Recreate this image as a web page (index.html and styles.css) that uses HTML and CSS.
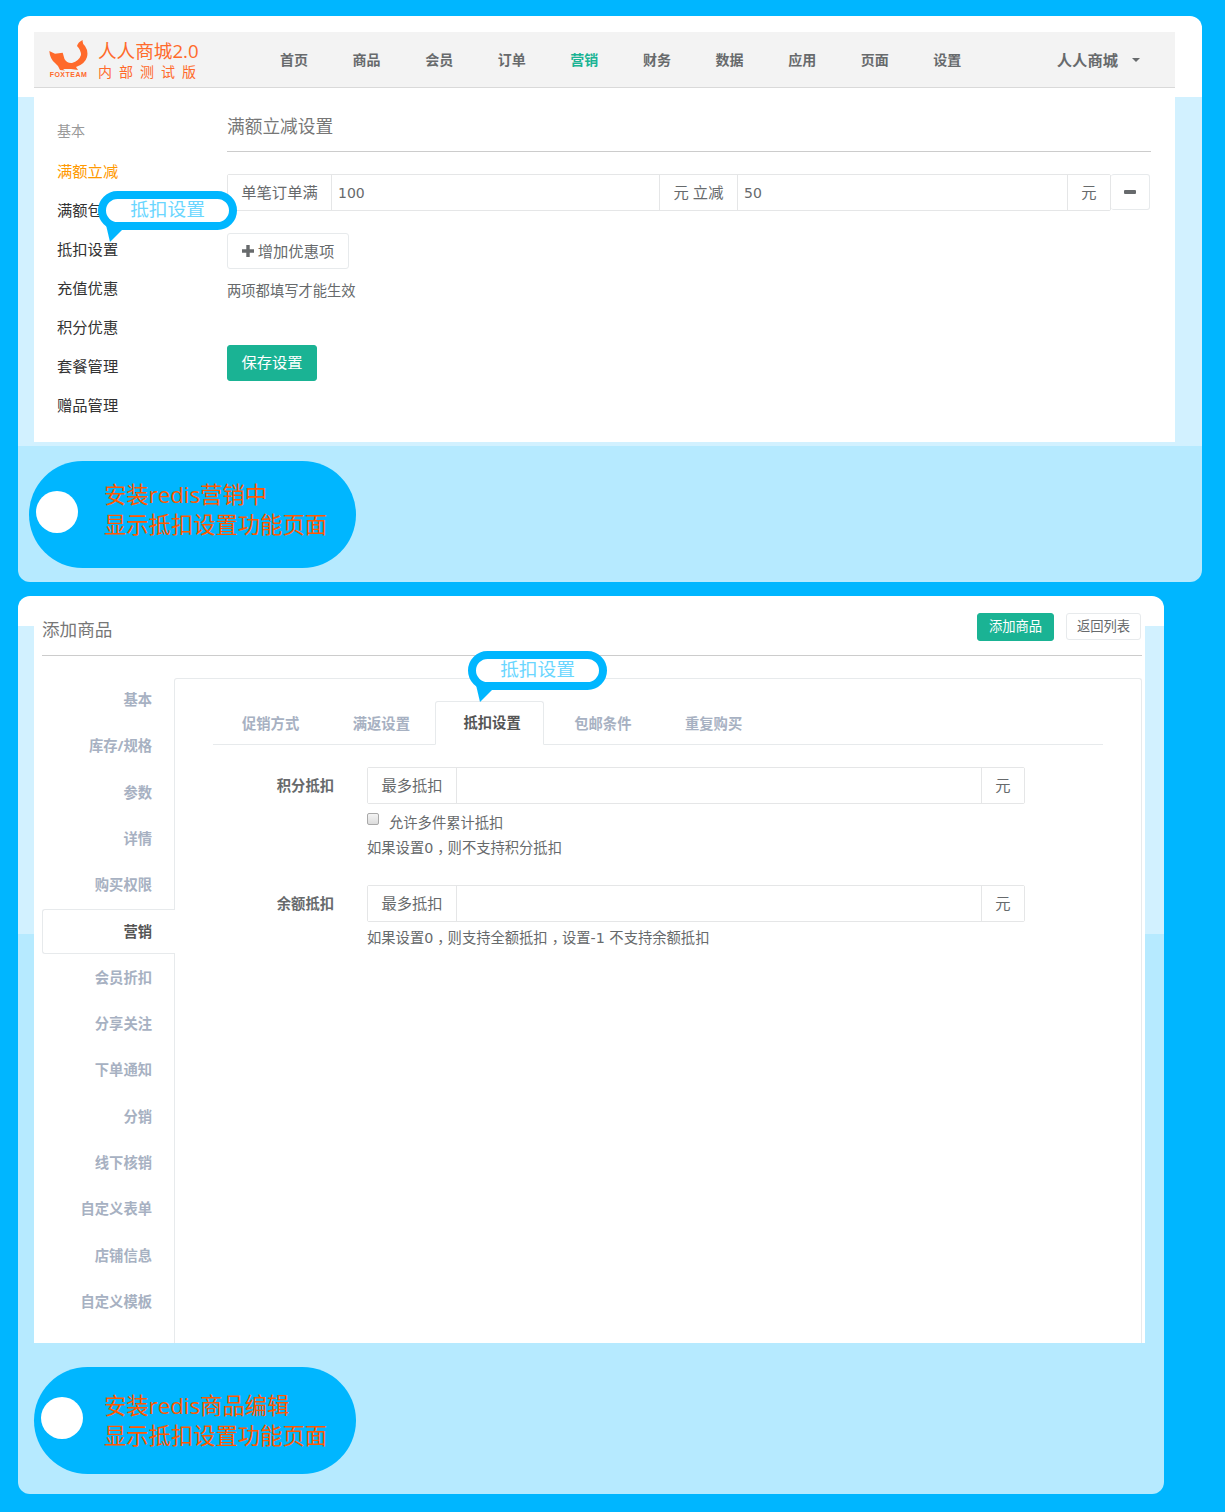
FILE: index.html
```html
<!DOCTYPE html>
<html lang="zh">

<head>
    <meta charset="UTF-8">
    <meta name="viewport" content="width=device-width, initial-scale=1.0">
    <title>安装redis 显示抵扣设置</title>
    <link rel="stylesheet" href="styles.css">
</head>

<body>

    <!-- 营销页 -->
    <section class="panel panel-market">
        <div class="sheet">
            <nav class="topnav">
                <div class="logo">
                    <div class="logo-mark">
                        <svg class="fox" viewBox="0 1 39 31" width="39" height="31">
                            <path d="M0.3 12 L6 14.7 L13.7 13.7 L15.5 20 Q18 24.5 23 24 Q30 22 32 16 Q32 11 28 7 Q29 3 33.7 1 Q33 4 36 7 Q39.5 12 38 18 Q36 25 27 28 L29 31 L22 30 L14 30 L16 31.5 L11 31 Q9 26 6 24 Q1 20 0.3 12 Z" fill="#ff6a2b"/>
                        </svg>
                        <span class="logo-team">FOXTEAM</span>
                    </div>
                    <div class="logo-text">
                        <span class="logo-name">人人商城2.0</span>
                        <span class="logo-sub">内部测试版</span>
                    </div>
                </div>
                <ul class="nav-list">
                    <li>首页</li>
                    <li>商品</li>
                    <li>会员</li>
                    <li>订单</li>
                    <li class="nav-on">营销</li>
                    <li>财务</li>
                    <li>数据</li>
                    <li>应用</li>
                    <li>页面</li>
                    <li>设置</li>
                </ul>
                <div class="nav-user">人人商城<span class="caret"></span></div>
            </nav>

            <div class="market-body">
                <ul class="side-menu">
                    <li class="side-title">基本</li>
                    <li class="side-on">满额立减</li>
                    <li>满额包邮</li>
                    <li>抵扣设置</li>
                    <li>充值优惠</li>
                    <li>积分优惠</li>
                    <li>套餐管理</li>
                    <li>赠品管理</li>
                </ul>
                <div class="market-main">
                    <h2 class="market-title">满额立减设置</h2>
                    <div class="rule-row">
                        <div class="input-group rule-group">
                            <span class="addon addon-order">单笔订单满</span>
                            <input class="field field-first" type="text" value="100">
                            <span class="addon addon-cut">元 立减</span>
                            <input class="field" type="text" value="50">
                            <span class="addon addon-unit">元</span>
                        </div>
                        <button class="btn btn-minus" type="button">
                            <svg viewBox="0 0 12 4" width="12" height="4"><rect width="12" height="4" rx="1" fill="#676a6c"/></svg>
                        </button>
                    </div>
                    <button class="btn btn-add" type="button">
                        <svg viewBox="0 0 12 12" width="12" height="12"><path d="M4.3 0h3.4v4.3H12v3.4H7.7V12H4.3V7.7H0V4.3h4.3z" fill="#676a6c"/></svg>
                        增加优惠项
                    </button>
                    <p class="rule-help">两项都填写才能生效</p>
                    <button class="btn btn-save" type="button">保存设置</button>
                </div>
            </div>
        </div>

        <div class="note note-market">
            <span class="note-dot"></span>
            <p class="note-text">安装redis营销中<br>显示抵扣设置功能页面</p>
        </div>

        <div class="bubble bubble-market">抵扣设置</div>
    </section>

    <!-- 商品编辑页 -->
    <section class="panel panel-goods">
        <div class="sheet sheet-goods">
            <header class="goods-head">
                <h2 class="goods-title">添加商品</h2>
                <div class="goods-actions">
                    <button class="btn btn-green-sm" type="button">添加商品</button>
                    <button class="btn btn-back" type="button">返回列表</button>
                </div>
            </header>

            <div class="goods-body">
                <ul class="goods-side">
                    <li>基本</li>
                    <li>库存/规格</li>
                    <li>参数</li>
                    <li>详情</li>
                    <li>购买权限</li>
                    <li class="goods-side-on">营销</li>
                    <li>会员折扣</li>
                    <li>分享关注</li>
                    <li>下单通知</li>
                    <li>分销</li>
                    <li>线下核销</li>
                    <li>自定义表单</li>
                    <li>店铺信息</li>
                    <li>自定义模板</li>
                </ul>

                <div class="goods-box">
                    <ul class="tabs">
                        <li>促销方式</li>
                        <li>满返设置</li>
                        <li class="tab-on">抵扣设置</li>
                        <li>包邮条件</li>
                        <li>重复购买</li>
                    </ul>

                    <div class="form-row">
                        <label class="form-label">积分抵扣</label>
                        <div class="form-col">
                            <div class="input-group form-group">
                                <span class="addon addon-max">最多抵扣</span>
                                <input class="field" type="text">
                                <span class="addon addon-unit">元</span>
                            </div>
                            <label class="check-line"><input type="checkbox"> 允许多件累计抵扣</label>
                            <p class="form-help">如果设置0<span class="comma">，</span>则不支持积分抵扣</p>
                        </div>
                    </div>

                    <div class="form-row">
                        <label class="form-label">余额抵扣</label>
                        <div class="form-col">
                            <div class="input-group form-group">
                                <span class="addon addon-max">最多抵扣</span>
                                <input class="field" type="text">
                                <span class="addon addon-unit">元</span>
                            </div>
                            <p class="form-help">如果设置0<span class="comma">，</span>则支持全额抵扣<span class="comma">，</span>设置-1 不支持余额抵扣</p>
                        </div>
                    </div>
                </div>
            </div>
        </div>

        <div class="note note-goods">
            <span class="note-dot"></span>
            <p class="note-text">安装redis商品编辑<br>显示抵扣设置功能页面</p>
        </div>

        <div class="bubble bubble-goods">抵扣设置</div>
    </section>

</body>

</html>
```

FILE: styles.css
```css
* {
    box-sizing: border-box;
}

body {
    font-family: "Open Sans", "Noto Sans CJK SC", sans-serif;
    margin: 0;
    padding: 16px 18px 0;
    height: 1512px;
    overflow: hidden;
    background-color: #00b6ff;
    color: #676a6c;
    font-size: 14px;
}

ul {
    list-style: none;
    margin: 0;
    padding: 0;
}

h2,
p {
    margin: 0;
    font-weight: 400;
}

/* Panels */
.panel {
    position: relative;
    border-radius: 12px;
}

.panel-market {
    width: 1184px;
    height: 566px;
    padding: 16px 27px 0 16px;
    background: linear-gradient(#fff 81px, #d2f1ff 81px, #d2f1ff 430px, #b6eaff 430px);
}

.panel-goods {
    width: 1146px;
    height: 898px;
    margin-top: 14px;
    padding: 0 19px 0 16px;
    background: linear-gradient(#fff 30px, #d2f1ff 30px, #d2f1ff 338px, #b6eaff 338px);
}

.sheet {
    background-color: #fff;
}

/* Top nav */
.topnav {
    display: flex;
    align-items: center;
    height: 56px;
    padding-right: 35px;
    background-color: #f3f3f3;
    border-bottom: 1px solid #d9d9d9;
}

.logo {
    display: flex;
    width: 223.7px;
    padding-left: 15px;
}

.logo-mark {
    display: flex;
    flex-direction: column;
    align-items: center;
    width: 39px;
}

.fox {
    display: block;
}

.logo-team {
    font-family: "Liberation Sans", sans-serif;
    font-size: 7px;
    font-weight: 700;
    letter-spacing: 0.5px;
    line-height: 10px;
    margin-top: -1px;
    color: #ff6a2b;
    white-space: nowrap;
}

.logo-text {
    display: flex;
    flex-direction: column;
    margin-left: 10px;
    color: #ff6a2b;
}

.logo-name {
    font-size: 18.6px;
    line-height: 22px;
    white-space: nowrap;
}

.logo-sub {
    font-size: 14px;
    line-height: 17px;
    letter-spacing: 7px;
    margin-top: 1px;
    white-space: nowrap;
}

.nav-list {
    display: flex;
    margin-bottom: 2px;
}

.nav-list li {
    width: 72.6px;
    text-align: center;
    font-weight: 700;
    color: #676a6c;
}

.nav-list .nav-on {
    color: #1ab394;
}

.nav-user {
    margin-left: auto;
    margin-bottom: 2px;
    font-size: 15.3px;
    font-weight: 700;
    color: #676a6c;
}

.caret {
    display: inline-block;
    margin-left: 14px;
    vertical-align: 4px;
    border-top: 4px solid #676a6c;
    border-left: 4px solid transparent;
    border-right: 4px solid transparent;
}

/* Market body */
.market-body {
    display: flex;
    height: 354px;
    padding: 23px 24px 0 23px;
}

.side-menu {
    width: 170px;
    font-size: 15.3px;
    color: #333;
}

.side-menu li {
    height: 39px;
    line-height: 39px;
}

.side-menu .side-title {
    height: 41px;
    font-size: 14px;
    color: #999;
}

.side-menu .side-on {
    color: #f90;
}

.market-main {
    flex: 1;
    margin-top: 3px;
}

.market-title {
    font-size: 17.7px;
    line-height: 24px;
    padding-bottom: 13px;
    border-bottom: 1px solid #ccc;
    color: #777;
}

.rule-row {
    display: flex;
    margin-top: 22px;
}

/* Input groups */
.input-group {
    display: flex;
    height: 37px;
    border: 1px solid #e5e6e7;
    border-radius: 2px;
}

.addon {
    display: flex;
    align-items: center;
    justify-content: center;
    flex: none;
    padding-bottom: 4px;
    font-size: 15.3px;
    color: #676a6c;
    background-color: #fff;
}

.addon-order {
    width: 104px;
    border-right: 1px solid #e5e6e7;
}

.addon-cut {
    width: 79px;
    border-left: 1px solid #e5e6e7;
    border-right: 1px solid #e5e6e7;
}

.addon-max {
    width: 89px;
    border-right: 1px solid #e5e6e7;
}

.addon-unit {
    width: 43px;
    border-left: 1px solid #e5e6e7;
}

.field {
    flex: 1;
    min-width: 0;
    border: 0;
    padding: 0 6px;
    font-family: "DejaVu Sans", sans-serif;
    font-size: 14px;
    color: #676a6c;
    background: transparent;
    outline: none;
}

.field-first {
    flex: none;
    width: 327px;
}

.rule-group {
    width: 884px;
}

/* Buttons */
.btn {
    font-family: inherit;
    cursor: pointer;
    border: 1px solid #e7eaec;
    border-radius: 3px;
    background-color: #fff;
    color: #676a6c;
}

.btn-minus {
    display: flex;
    align-items: center;
    justify-content: center;
    width: 39px;
    height: 36px;
    padding: 0;
    border-left: 0;
}

.btn-add {
    display: block;
    width: 122px;
    height: 36px;
    margin-top: 22px;
    padding: 0 0 3px;
    font-size: 15.3px;
}

.btn-save {
    display: block;
    width: 90px;
    height: 36px;
    margin-top: 44px;
    padding: 0 0 5px;
    font-size: 15.3px;
    color: #fff;
    background-color: #1ab394;
    border-color: #1ab394;
}

.rule-help {
    margin-top: 12px;
    line-height: 20px;
    font-size: 14.3px;
}

/* Goods page */
.sheet-goods {
    height: 747px;
    padding: 0 3px 0 8px;
}

.goods-head {
    display: flex;
    justify-content: space-between;
    height: 60px;
    padding-top: 17px;
    border-bottom: 1px solid #ccc;
}

.goods-title {
    font-size: 17.6px;
    line-height: 26px;
    margin-top: 3px;
    color: #777;
}

.goods-actions {
    display: flex;
    align-items: flex-start;
    gap: 12px;
    padding-right: 1px;
}

.btn-green-sm {
    width: 77px;
    height: 28px;
    padding: 0 0 3px;
    font-size: 13.3px;
    color: #fff;
    background-color: #1ab394;
    border-color: #1ab394;
}

.btn-back {
    width: 75px;
    height: 27px;
    padding: 0 0 2px;
    font-size: 13.3px;
}

.goods-body {
    display: flex;
    height: 665px;
    margin-top: 22px;
}

.goods-side {
    position: relative;
    z-index: 1;
    flex: none;
    width: 133px;
    margin-top: -1px;
    margin-right: -1px;
}

.goods-side li {
    height: 46.3px;
    line-height: 46px;
    padding-right: 23px;
    text-align: right;
    font-size: 14.3px;
    font-weight: 700;
    color: #a7b1c2;
}

.goods-side .goods-side-on {
    height: 44.3px;
    line-height: 44px;
    margin: 1px 0;
    color: #555;
    background-color: #fff;
    border: 1px solid #e7eaec;
    border-right: 0;
    border-radius: 3px 0 0 3px;
}

.goods-box {
    flex: 1;
    padding: 22px 38px 0;
    border: 1px solid #e7eaec;
    border-bottom: 0;
    border-radius: 3px 3px 0 0;
}

.tabs {
    display: flex;
    height: 44px;
    border-bottom: 1px solid #e7eaec;
}

.tabs li {
    width: 109.75px;
    height: 44px;
    margin-right: 1px;
    padding-left: 29px;
    line-height: 45px;
    font-size: 14.3px;
    font-weight: 700;
    color: #a7b1c2;
}

.tabs .tab-on {
    line-height: 42px;
    color: #555;
    background-color: #fff;
    border: 1px solid #e7eaec;
    border-bottom-color: #fff;
    border-radius: 3px 3px 0 0;
    padding-left: 28px;
}

.form-row {
    display: flex;
    margin-top: 22px;
}

.form-row + .form-row {
    margin-top: 27px;
}

.form-label {
    flex: none;
    width: 121px;
    margin-right: 33px;
    line-height: 38px;
    text-align: right;
    font-size: 14.3px;
    font-weight: 700;
}

.form-group {
    width: 658px;
}

.check-line {
    display: flex;
    align-items: center;
    gap: 9px;
    height: 20px;
    margin-top: 7px;
    font-size: 14.3px;
}

.check-line input {
    appearance: none;
    flex: none;
    width: 12px;
    height: 12px;
    margin: 0 1px 5px 0;
    border: 1px solid #a9a9a9;
    border-radius: 2px;
    background: linear-gradient(#f4f4f4, #dcdcdc);
}

.form-help {
    margin-top: 6px;
    line-height: 20px;
    font-family: "DejaVu Sans", "Noto Sans CJK SC", sans-serif;
    font-size: 14.3px;
}

.check-line + .form-help {
    margin-top: 7px;
}

/* nudge the fullwidth comma toward the middle of its cell */
.comma {
    margin-left: 4px;
    letter-spacing: -4px;
}

/* Orange notes on blue pills */
.note {
    display: flex;
    align-items: center;
    height: 107px;
    border-radius: 54px;
    background-color: #00b6ff;
}

.note-market {
    width: 327px;
    margin: 19px 0 0 -5px;
}

.note-goods {
    width: 322px;
    margin-top: 24px;
}

.note-dot {
    flex: none;
    width: 42px;
    height: 42px;
    margin: 0 0 6px 7px;
    border-radius: 50%;
    background-color: #fff;
}

.note-text {
    font-size: 22.3px;
    line-height: 29.3px;
    color: #ff5a00;
    white-space: nowrap;
}

.note-market .note-text {
    margin: 0 0 10px 26px;
}

.note-goods .note-text {
    margin-left: 21px;
}

/* Speech bubbles */
.bubble {
    position: absolute;
    z-index: 2;
    width: 139px;
    height: 39px;
    border: 8px solid #00b6ff;
    border-radius: 20px;
    background-color: #fff;
    text-align: center;
    font-size: 18.7px;
    line-height: 20px;
    color: #6ad6ff;
}

.bubble::after {
    content: "";
    position: absolute;
    left: 0;
    top: 26px;
    width: 18px;
    height: 17px;
    background-color: #00b6ff;
    clip-path: polygon(0 0, 100% 3px, 4px 100%);
}

.bubble-market {
    left: 80px;
    top: 175px;
}

.bubble-goods {
    left: 450px;
    top: 55px;
}
```
